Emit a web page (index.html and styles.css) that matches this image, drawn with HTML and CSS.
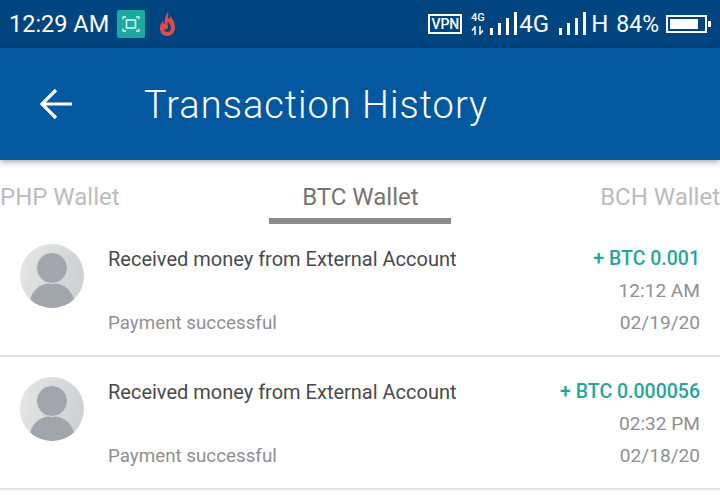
FILE: index.html
```html
<!DOCTYPE html>
<html lang="en">
<head>
    <meta charset="UTF-8">
    <meta name="viewport" content="width=device-width, initial-scale=1.0">
    <title>Transaction History</title>
    <link rel="stylesheet" href="styles.css">
</head>
<body>
    <div class="status-bar">
        <div class="status-left">
            <span class="clock">12:29 AM</span>
            <span class="scan-badge">
                <svg width="18" height="16" viewBox="0 0 18 16" fill="none" stroke="#d8f3ef" stroke-width="1.300">
                    <path d="M1 3.500V1h3M14 1h3v2.500M17 12.500V15h-3M4 15H1v-2.500"/>
                    <rect x="4.500" y="4" width="9" height="8" stroke-width="1.600"/>
                </svg>
            </span>
            <svg class="flame" width="17" height="26" viewBox="0 0 17 26">
                <path d="M9 1c1 3-1 5 1 7 1-1 1-2 1-3 3 3 5 7 5 11 0 5-3 9-7.500 9S1 22 1 17c0-3 1-5 3-7 0 2 1 3 2 3C5 8 7 4 9 1z" fill="#df4a4d"/>
                <path d="M9 10c0 2 3 3 3 7 0 3-2 4-3.500 4S5 20 5 18c2 1 4 0 4-2 0-2-1-3 0-6z" fill="#00457f"/>
            </svg>
        </div>
        <div class="status-right">
            <span class="vpn">VPN</span>
            <span class="net-small">
                <span class="net-small-label">4G</span>
                <svg width="13" height="9" viewBox="0 0 13 9" fill="none" stroke="#fff" stroke-width="1.500">
                    <path d="M4 9V1L1 4.500M9 0v8l3-3.500"/>
                </svg>
            </span>
            <svg class="signal" width="28" height="24" viewBox="0 0 28 24" fill="#fff">
                <rect x="0" y="16" width="3" height="7"/>
                <rect x="8" y="11" width="3" height="12"/>
                <rect x="16" y="6" width="3" height="17"/>
                <rect x="24" y="0" width="3" height="23"/>
            </svg>
            <span class="net">4G</span>
            <svg class="signal signal-2" width="28" height="24" viewBox="0 0 28 24" fill="#fff">
                <rect x="0" y="16" width="3" height="7"/>
                <rect x="8" y="11" width="3" height="12"/>
                <rect x="16" y="6" width="3" height="17"/>
                <rect x="24" y="0" width="3" height="23"/>
            </svg>
            <span class="net net-h">H</span>
            <span class="battery-pct">84%</span>
            <span class="battery"><span class="battery-fill"></span></span>
            <span class="battery-tip"></span>
        </div>
    </div>

    <header class="app-bar">
        <svg class="back" width="36" height="34" viewBox="0 0 36 34" fill="none" stroke="#fff" stroke-width="3.200">
            <path d="M34 17H4M18 3L4 17l14 14"/>
        </svg>
        <h1>Transaction History</h1>
    </header>

    <nav class="tabs">
        <span class="tab">PHP Wallet</span>
        <span class="tab tab-active">BTC Wallet</span>
        <span class="tab">BCH Wallet</span>
    </nav>

    <main>
        <div class="row">
            <svg class="avatar" width="64" height="64" viewBox="0 0 64 64">
                <defs>
                    <linearGradient id="avatarBg1" x1="0" y1="0" x2="1" y2="0.300">
                        <stop offset="0" stop-color="#e6e7e7"/>
                        <stop offset="1" stop-color="#cfd2d3"/>
                    </linearGradient>
                    <clipPath id="clip1"><circle cx="32" cy="32" r="32"/></clipPath>
                </defs>
                <circle cx="32" cy="32" r="32" fill="url(#avatarBg1)"/>
                <g clip-path="url(#clip1)" fill="#a0a6ab">
                    <ellipse cx="32" cy="59" rx="22" ry="20"/>
                    <circle cx="32" cy="24" r="15.500" stroke="#d9dbdc" stroke-width="1"/>
                </g>
            </svg>
            <div class="row-text">
                <div class="row-title">Received money from External Account</div>
                <div class="row-status">Payment successful</div>
            </div>
            <div class="row-meta">
                <div class="amount">+ BTC 0.001</div>
                <div>12:12 AM</div>
                <div>02/19/20</div>
            </div>
        </div>
        <div class="row">
            <svg class="avatar" width="64" height="64" viewBox="0 0 64 64">
                <defs>
                    <linearGradient id="avatarBg2" x1="0" y1="0" x2="1" y2="0.300">
                        <stop offset="0" stop-color="#e6e7e7"/>
                        <stop offset="1" stop-color="#cfd2d3"/>
                    </linearGradient>
                    <clipPath id="clip2"><circle cx="32" cy="32" r="32"/></clipPath>
                </defs>
                <circle cx="32" cy="32" r="32" fill="url(#avatarBg2)"/>
                <g clip-path="url(#clip2)" fill="#a0a6ab">
                    <ellipse cx="32" cy="59" rx="22" ry="20"/>
                    <circle cx="32" cy="24" r="15.500" stroke="#d9dbdc" stroke-width="1"/>
                </g>
            </svg>
            <div class="row-text">
                <div class="row-title">Received money from External Account</div>
                <div class="row-status">Payment successful</div>
            </div>
            <div class="row-meta">
                <div class="amount">+ BTC 0.000056</div>
                <div>02:32 PM</div>
                <div>02/18/20</div>
            </div>
        </div>
    </main>
</body>
</html>
```

FILE: styles.css
```css
html, body {
    margin: 0;
    padding: 0;
}
body {
    width: 720px;
    height: 504px;
    overflow: hidden;
    background: #fff;
    font-family: 'Roboto', sans-serif;
}
.status-bar {
    height: 48px;
    background: #00457f;
    color: #fff;
    display: flex;
    justify-content: space-between;
    align-items: center;
}
.status-left {
    display: flex;
    align-items: center;
    padding-left: 9px;
}
.clock {
    font-size: 23.500px;
    width: 108px;
}
.scan-badge {
    width: 28px;
    height: 28px;
    background: #1aaa9f;
    border-radius: 2px;
    display: flex;
    align-items: center;
    justify-content: center;
}
.flame {
    margin-left: 14px;
}
.status-right {
    display: flex;
    align-items: center;
    padding-right: 9px;
}
.vpn {
    border: 2px solid #fff;
    font-size: 14px;
    font-weight: 500;
    line-height: 16px;
    width: 30px;
    text-align: center;
}
.net-small {
    display: flex;
    flex-direction: column;
    align-items: center;
    width: 15px;
    margin-left: 8px;
    gap: 4px;
}
.net-small-label {
    font-size: 11px;
    line-height: 9px;
    font-weight: 500;
}
.signal {
    margin-left: 5px;
}
.net {
    font-size: 24px;
    margin-left: 1px;
}
.signal-2 {
    margin-left: 10px;
}
.net-h {
    margin-left: 4px;
}
.battery-pct {
    font-size: 23px;
    margin-left: 8px;
}
.battery {
    box-sizing: border-box;
    width: 41px;
    height: 18px;
    border: 2px solid #fff;
    margin-left: 7px;
    padding: 2px;
}
.battery-fill {
    display: block;
    width: 28px;
    height: 10px;
    background: #fff;
}
.battery-tip {
    width: 3px;
    height: 6px;
    background: #fff;
    margin-left: 1px;
}
.app-bar {
    height: 112px;
    background: #03589f;
    color: #fff;
    display: flex;
    align-items: center;
    box-shadow: 0 2px 6px rgba(0, 0, 0, 0.35);
    position: relative;
}
.back {
    margin-left: 38px;
}
.app-bar h1 {
    margin: 1px 0 0 70px;
    font-size: 38px;
    font-weight: 300;
    letter-spacing: 1px;
}
.tabs {
    height: 64px;
    display: flex;
    justify-content: space-between;
    align-items: flex-start;
}
.tab {
    font-size: 24px;
    color: #bcbcbc;
    padding-top: 23px;
    line-height: 28px;
    height: 41px;
}
.tab-active {
    color: #757575;
    width: 182px;
    text-align: center;
    border-bottom: 6px solid #8a8a8a;
    height: 35px;
    margin-left: 1px;
}
.row {
    border-bottom: 2px solid #e2e2e2;
    display: flex;
    height: 131px;
    padding-left: 20px;
    padding-right: 20px;
}
.avatar {
    margin-top: 20px;
    flex: none;
}
.row-text {
    flex: 1;
    margin-left: 24px;
    margin-top: 22px;
}
.row-title {
    font-size: 20px;
    line-height: 26px;
    color: #4a4a4a;
}
.row-status {
    font-size: 18.800px;
    line-height: 26px;
    color: #8f8f8f;
    margin-top: 38px;
}
.row-meta {
    text-align: right;
    font-size: 19.100px;
    line-height: 32px;
    color: #8f8f8f;
    margin-top: 19px;
}
.amount {
    font-size: 19.500px;
    font-weight: 500;
    color: #26a69a;
}
```
